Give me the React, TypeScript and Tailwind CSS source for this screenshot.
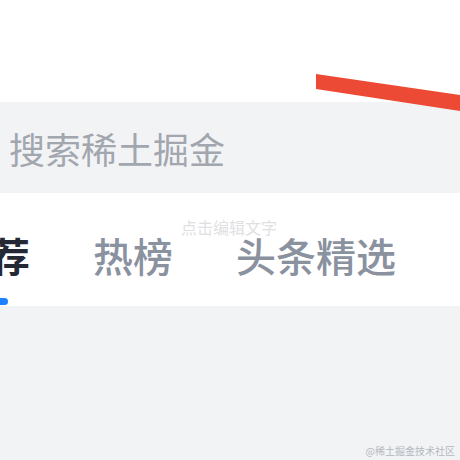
export default function App() {
  const tabs = ["热榜", "头条精选"];

  return (
    <div
      className="relative w-[460px] h-[460px] overflow-hidden bg-[#f2f3f5]"
      style={{ fontFamily: '"Noto Sans CJK SC", "Noto Sans", sans-serif' }}
    >
      {/* top blank header */}
      <div className="h-[102px] bg-white" />

      {/* search bar */}
      <div className="h-[91px] bg-[#f2f3f5] flex items-center pl-[9px]">
        <span className="text-[36px] leading-none text-[#a2a6ae]">搜索稀土掘金</span>
      </div>

      {/* tabs */}
      <div className="h-[113px] bg-white pt-[42px] overflow-hidden">
        <div className="flex items-start gap-[63px] -ml-[10px]">
          <div className="flex flex-col">
            <span className="text-[40px] leading-none font-bold text-[#252933]">荐</span>
            <div className="mt-[23px] ml-[-2px] w-[20px] h-[7px] rounded-full bg-[#1e80ff]" />
          </div>
          {tabs.map((t) => (
            <span key={t} className="text-[40px] leading-none font-medium text-[#8a919f]">
              {t}
            </span>
          ))}
        </div>
      </div>

      {/* editor hint */}
      <span className="absolute left-[181px] top-[219px] text-[16px] leading-none text-[#dfe0e3]">
        点击编辑文字
      </span>

      {/* red annotation stroke */}
      <svg className="absolute left-0 top-0" width="460" height="460" viewBox="0 0 460 460">
        <polygon points="316,74 460,95 460,111 316,89" fill="#ec4a35" />
      </svg>

      {/* watermark */}
      <span className="absolute right-[5px] bottom-[4px] text-[10px] leading-none text-[#b4b8bf]">
        @稀土掘金技术社区
      </span>
    </div>
  );
}
